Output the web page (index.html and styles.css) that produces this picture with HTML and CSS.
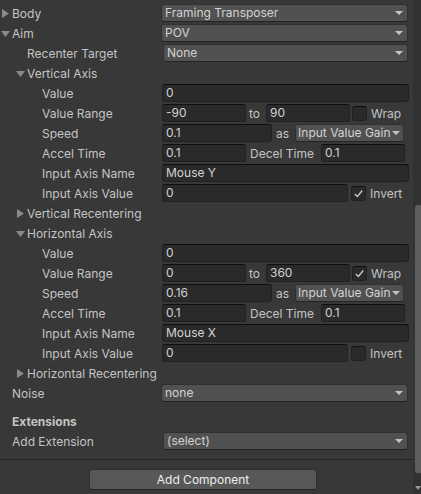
FILE: index.html
```html
<!DOCTYPE html>
<html>
<head>
<meta charset="utf-8">
<link rel="stylesheet" href="styles.css">
</head>
<body>
<div class="page">
  <div class="main">
    <div class="rows">
      <div class="row">
        <div class="label f0"><svg class="arrow" viewBox="0 0 11 20"><path d="M2 6 L9 10.5 L2 15 Z"/></svg>Body</div>
        <div class="value"><div class="dropdown">Framing Transposer<svg class="dd" viewBox="0 0 8 4"><path d="M0 0 L8 0 L4 4 Z"/></svg></div></div>
      </div>
      <div class="row">
        <div class="label f0"><svg class="arrow" viewBox="0 0 11 20"><path d="M1 8 L10 8 L5.5 14 Z"/></svg>Aim</div>
        <div class="value"><div class="dropdown">POV<svg class="dd" viewBox="0 0 8 4"><path d="M0 0 L8 0 L4 4 Z"/></svg></div></div>
      </div>
      <div class="row">
        <div class="label l1">Recenter Target</div>
        <div class="value"><div class="dropdown shift">None<svg class="dd" viewBox="0 0 8 4"><path d="M0 0 L8 0 L4 4 Z"/></svg></div></div>
      </div>
      <div class="row">
        <div class="label f1"><svg class="arrow" viewBox="0 0 11 20"><path d="M1 8 L10 8 L5.5 14 Z"/></svg>Vertical Axis</div>
      </div>
      <div class="row">
        <div class="label l2">Value</div>
        <div class="value"><div class="field grow">0</div></div>
      </div>
      <div class="row">
        <div class="label l2">Value Range</div>
        <div class="value"><div class="field w84">-90</div><span class="mid to">to</span><div class="field w84">90</div><span class="check"></span><span class="mid">Wrap</span></div>
      </div>
      <div class="row">
        <div class="label l2">Speed</div>
        <div class="value"><div class="field w110">0.1</div><span class="mid as">as</span><div class="dropdown small">Input Value Gain<svg class="dd2" viewBox="0 0 8 4"><path d="M0 0 L8 0 L4 4 Z"/></svg></div></div>
      </div>
      <div class="row">
        <div class="label l2">Accel Time</div>
        <div class="value"><div class="field w84">0.1</div><span class="mid decel">Decel Time</span><div class="field w84">0.1</div></div>
      </div>
      <div class="row">
        <div class="label l2">Input Axis Name</div>
        <div class="value"><div class="field grow">Mouse Y</div></div>
      </div>
      <div class="row">
        <div class="label l2">Input Axis Value</div>
        <div class="value"><div class="field w186">0</div><span class="check inv"><svg viewBox="0 0 14 14"><path d="M3 7.5 L5.8 10.2 L11 3.8" /></svg></span><span class="mid">Invert</span></div>
      </div>
      <div class="row">
        <div class="label f1"><svg class="arrow" viewBox="0 0 11 20"><path d="M2 6 L9 10.5 L2 15 Z"/></svg>Vertical Recentering</div>
      </div>
      <div class="row">
        <div class="label f1"><svg class="arrow" viewBox="0 0 11 20"><path d="M1 8 L10 8 L5.5 14 Z"/></svg>Horizontal Axis</div>
      </div>
      <div class="row">
        <div class="label l2">Value</div>
        <div class="value"><div class="field grow">0</div></div>
      </div>
      <div class="row">
        <div class="label l2">Value Range</div>
        <div class="value"><div class="field w84">0</div><span class="mid to">to</span><div class="field w84">360</div><span class="check"><svg viewBox="0 0 14 14"><path d="M3 7.5 L5.8 10.2 L11 3.8" /></svg></span><span class="mid">Wrap</span></div>
      </div>
      <div class="row">
        <div class="label l2">Speed</div>
        <div class="value"><div class="field w110">0.16</div><span class="mid as">as</span><div class="dropdown small">Input Value Gain<svg class="dd2" viewBox="0 0 8 4"><path d="M0 0 L8 0 L4 4 Z"/></svg></div></div>
      </div>
      <div class="row">
        <div class="label l2">Accel Time</div>
        <div class="value"><div class="field w84">0.1</div><span class="mid decel">Decel Time</span><div class="field w84">0.1</div></div>
      </div>
      <div class="row">
        <div class="label l2">Input Axis Name</div>
        <div class="value"><div class="field grow">Mouse X</div></div>
      </div>
      <div class="row">
        <div class="label l2">Input Axis Value</div>
        <div class="value"><div class="field w186">0</div><span class="check inv"></span><span class="mid">Invert</span></div>
      </div>
      <div class="row">
        <div class="label f1"><svg class="arrow" viewBox="0 0 11 20"><path d="M2 6 L9 10.5 L2 15 Z"/></svg>Horizontal Recentering</div>
      </div>
      <div class="row">
        <div class="label l0">Noise</div>
        <div class="value"><div class="dropdown">none<svg class="dd" viewBox="0 0 8 4"><path d="M0 0 L8 0 L4 4 Z"/></svg></div></div>
      </div>
    </div>
    <div class="ext">
      <div class="row">
        <div class="label l0 bold">Extensions</div>
      </div>
      <div class="row">
        <div class="label l0">Add Extension</div>
        <div class="value"><div class="dropdown shift">(select)<svg class="dd" viewBox="0 0 8 4"><path d="M0 0 L8 0 L4 4 Z"/></svg></div></div>
      </div>
    </div>
    <div class="footer">
      <div class="button">Add Component</div>
    </div>
  </div>
  <div class="scrollbar">
    <div class="thumb"></div>
    <svg class="sdown" viewBox="0 0 6 4"><path d="M0 0 L6 0 L3 4 Z"/></svg>
  </div>
</div>
</body>
</html>
```

FILE: styles.css
```css
html, body {
  margin: 0;
  padding: 0;
  background: #383838;
}
body {
  font-family: Inter, "Noto Sans", "Liberation Sans", sans-serif;
  font-size: 12px;
  color: #c4c4c4;
  width: 421px;
  height: 494px;
  overflow: hidden;
}
.page {
  display: flex;
  height: 494px;
}
.main {
  width: 413px;
  display: flex;
  flex-direction: column;
}
.rows {
  padding-top: 3px;
}
.row {
  display: flex;
  align-items: center;
  height: 20px;
}
.label {
  width: 161px;
  box-sizing: border-box;
  display: flex;
  align-items: center;
  white-space: nowrap;
  flex-shrink: 0;
}
.l0 { padding-left: 12px; }
.l1 { padding-left: 27px; }
.l2 { padding-left: 42px; }
.f0 { padding-left: 0; }
.f1 { padding-left: 15px; }
.bold { font-weight: 700; }
.arrow {
  width: 11px;
  height: 20px;
  margin-right: 1px;
  fill: #8a8a8a;
  flex-shrink: 0;
}
.value {
  display: flex;
  align-items: center;
  width: 248px;
  height: 20px;
}
.field {
  box-sizing: border-box;
  height: 18px;
  margin-left: 1px;
  background: #2a2a2a;
  border: 1px solid #212121;
  border-top-color: #0f0f0f;
  border-radius: 3px;
  color: #d2d2d2;
  padding-left: 3px;
  line-height: 16px;
  white-space: nowrap;
}
.grow { flex: 1; }
.w84 { width: 84px; flex-shrink: 0; }
.w110 { width: 110px; flex-shrink: 0; }
.w186 { width: 186px; flex-shrink: 0; }
.mid {
  white-space: nowrap;
  color: #c4c4c4;
}
.to { margin: 0 5px 0 3px; }
.as { margin: 0 6px 0 4px; }
.decel { margin: 0 6px 0 4px; }
.dropdown {
  box-sizing: border-box;
  flex: 1;
  height: 18px;
  margin-right: 1px;
  background: #515151;
  border: 1px solid #303030;
  border-bottom-color: #242424;
  border-radius: 3px;
  color: #d2d2d2;
  padding-left: 3px;
  line-height: 16px;
  display: flex;
  align-items: center;
  white-space: nowrap;
  position: relative;
}
.dropdown.shift { margin-left: 2px; }
.dropdown.small {
  flex: none;
  width: 109px;
  overflow: hidden;
  padding-left: 2px;
}
.dd {
  position: absolute;
  right: 4px;
  top: 6px;
  width: 8px;
  height: 4px;
  fill: #c4c4c4;
}
.dd2 {
  width: 8px;
  height: 4px;
  margin-left: 1px;
  fill: #c4c4c4;
  flex-shrink: 0;
}
.check {
  box-sizing: border-box;
  width: 15px;
  height: 15px;
  flex-shrink: 0;
  margin: 0 4px 0 2px;
  background: #2a2a2a;
  border: 1px solid #212121;
  border-top-color: #0f0f0f;
  border-radius: 3px;
  display: flex;
}
.check.inv { margin-left: 3px; }
.check svg {
  width: 13px;
  height: 13px;
  fill: none;
  stroke: #c4c4c4;
  stroke-width: 1.6;
}
.ext {
  margin-top: 8px;
}
.footer {
  margin-top: 8px;
  border-top: 1px solid #232323;
  padding-top: 9px;
  display: flex;
}
.button {
  margin-left: 89px;
  width: 228px;
  height: 21px;
  box-sizing: border-box;
  background: #585858;
  border: 1px solid #303030;
  border-bottom-color: #242424;
  border-radius: 3px;
  color: #eeeeee;
  text-align: center;
  line-height: 19px;
}
.scrollbar {
  width: 8px;
  background: #323232;
  position: relative;
}
.thumb {
  position: absolute;
  left: 2px;
  right: 0;
  top: 205px;
  height: 268px;
  background: #5e5e5e;
  border-radius: 3px 0 0 3px;
}
.sdown {
  position: absolute;
  left: 2px;
  top: 486px;
  width: 6px;
  height: 4px;
  fill: #9a9a9a;
}
```
